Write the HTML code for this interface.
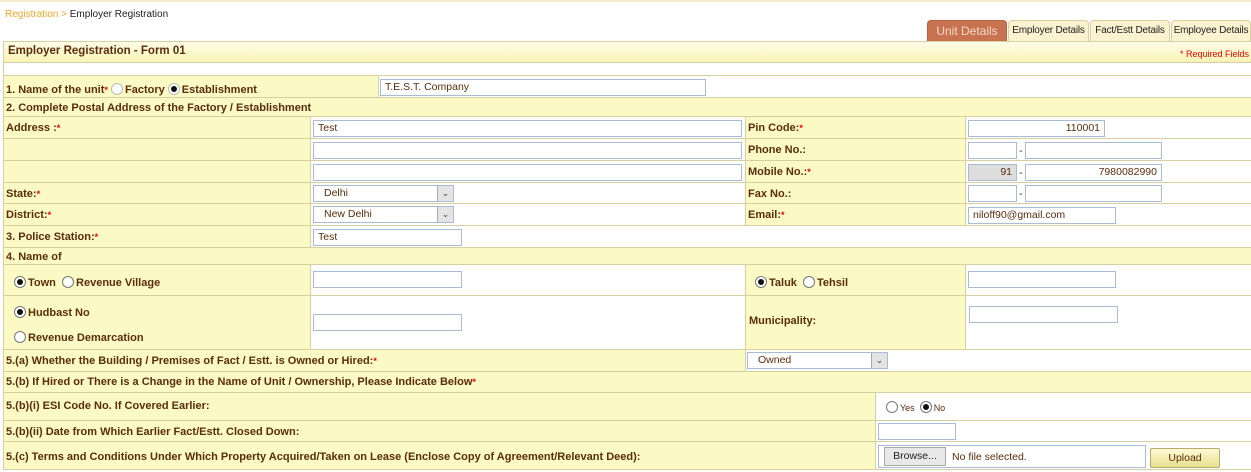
<!DOCTYPE html>
<html><head><meta charset="utf-8"><style>
*{box-sizing:border-box;margin:0;padding:0}
body{width:1251px;height:472px;background:#fff;font-family:"Liberation Sans",Arial,sans-serif;font-size:11px;color:#5a2d0c;position:relative;overflow:hidden}
.a{position:absolute}
.y{position:absolute;background:#fbf9c4;border-left:1px solid #d6cfa2;border-bottom:1px solid #d6cfa2}
.w{position:absolute;background:#fff;border-left:1px solid #d6cfa2;border-bottom:1px solid #d6cfa2}
.b{font-weight:bold;font-size:11px;color:#5a2d0c;white-space:nowrap}
.r{color:#e00;font-size:9px}
.in{position:absolute;background:#fff;border:1px solid #a9bcd4;height:17px;font-size:10.5px;color:#5a2d0c;padding:1px 4px;white-space:nowrap}
.rad{display:inline-block;width:12px;height:12px;border:1px solid #777;border-radius:50%;background:#fff;vertical-align:-2px;position:relative;margin-right:2px}
.rad.on:after{content:"";position:absolute;left:2px;top:2px;width:6px;height:6px;border-radius:50%;background:#111}
.sel{position:absolute;background:#fff;border:1px solid #a9bcd4;height:17px;font-size:10.5px;padding:1px 10px;color:#5a2d0c}
.sel i{position:absolute;right:0;top:0;width:16px;height:15px;background:#e4e4e4;border-left:1px solid #aaa;font-style:normal;font-size:9px;text-align:center;line-height:15px;color:#444}
.tab{position:absolute;top:20px;height:21px;background:#fbf3cf;border:1px solid #d6cfa2;border-bottom:none;border-radius:4px 4px 0 0;font-size:10px;letter-spacing:-0.2px;color:#222;text-align:center;line-height:20px;white-space:nowrap;overflow:hidden}
</style></head><body>
<div class="a" style="left:0;top:0;width:1251px;height:2px;background:#f3efcd"></div>
<div class="a" style="left:5px;top:9px;font-size:10px;"><span style="color:#f5a623">Registration &gt; </span><span style="color:#222">Employer Registration</span></div>
<div class="tab" style="left:927px;width:80px;background:#c8734f;color:#f3d9c8;font-size:12px;letter-spacing:0;border-color:#b8633f">Unit Details</div>
<div class="tab" style="left:1008px;width:81px">Employer Details</div>
<div class="tab" style="left:1090px;width:80px">Fact/Estt Details</div>
<div class="tab" style="left:1171px;width:80px">Employee Details</div>
<div class="a" style="left:3px;top:41px;width:1248px;height:22px;background:linear-gradient(#fefde8,#f7f3b4);border:1px solid #d6cfa2;border-right:none"></div>
<div class="a b" style="left:8px;top:45px;font-size:11.5px">Employer Registration - Form 01</div>
<div class="a" style="right:2px;top:49px;color:#e00;font-size:9px">* Required Fields</div>
<div class="w" style="left:3px;top:63px;width:1248px;height:13px"></div>
<div class="y" style="left:3px;top:76px;width:375px;height:22px"></div>
<div class="w" style="left:378px;top:76px;width:873px;height:22px"></div>
<div class="a b" style="left:6px;top:83px">1. Name of the unit<span class="r">*</span> <span class="rad" style="border-color:#bbb"></span>Factory <span class="rad on" style="border-color:#bbb"></span>Establishment</div>
<div class="in" style="left:380px;top:79px;width:326px">T.E.S.T. Company</div>
<div class="y" style="left:3px;top:98px;width:1248px;height:19px"></div>
<div class="a b" style="left:6px;top:102px">2. Complete Postal Address of the Factory / Establishment</div>
<div class="y" style="left:3px;top:117px;width:307px;height:22px"></div><div class="w" style="left:310px;top:117px;width:435px;height:22px"></div><div class="y" style="left:745px;top:117px;width:220px;height:22px"></div><div class="w" style="left:965px;top:117px;width:286px;height:22px"></div>
<div class="y" style="left:3px;top:139px;width:307px;height:22px"></div><div class="w" style="left:310px;top:139px;width:435px;height:22px"></div><div class="y" style="left:745px;top:139px;width:220px;height:22px"></div><div class="w" style="left:965px;top:139px;width:286px;height:22px"></div>
<div class="y" style="left:3px;top:161px;width:307px;height:22px"></div><div class="w" style="left:310px;top:161px;width:435px;height:22px"></div><div class="y" style="left:745px;top:161px;width:220px;height:22px"></div><div class="w" style="left:965px;top:161px;width:286px;height:22px"></div>
<div class="y" style="left:3px;top:183px;width:307px;height:21px"></div><div class="w" style="left:310px;top:183px;width:435px;height:21px"></div><div class="y" style="left:745px;top:183px;width:220px;height:21px"></div><div class="w" style="left:965px;top:183px;width:286px;height:21px"></div>
<div class="y" style="left:3px;top:204px;width:307px;height:22px"></div><div class="w" style="left:310px;top:204px;width:435px;height:22px"></div><div class="y" style="left:745px;top:204px;width:220px;height:22px"></div><div class="w" style="left:965px;top:204px;width:286px;height:22px"></div>
<div class="y" style="left:3px;top:226px;width:307px;height:22px"></div><div class="w" style="left:310px;top:226px;width:941px;height:22px"></div>
<div class="a b" style="left:6px;top:122px">Address :<span class="r">*</span></div>
<div class="a b" style="left:6px;top:188px">State:<span class="r">*</span></div>
<div class="a b" style="left:6px;top:209px">District:<span class="r">*</span></div>
<div class="a b" style="left:6px;top:231px">3. Police Station:<span class="r">*</span></div>
<div class="in" style="left:313px;top:120px;width:429px">Test</div>
<div class="in" style="left:313px;top:142px;width:429px"></div>
<div class="in" style="left:313px;top:164px;width:429px"></div>
<div class="sel" style="left:313px;top:185px;width:141px">Delhi<i>&#8964;</i></div>
<div class="sel" style="left:313px;top:206px;width:141px">New Delhi<i>&#8964;</i></div>
<div class="in" style="left:313px;top:229px;width:149px">Test</div>
<div class="a b" style="left:748px;top:122px">Pin Code:<span class="r">*</span></div>
<div class="a b" style="left:748px;top:144px">Phone No.:</div>
<div class="a b" style="left:748px;top:166px">Mobile No.:<span class="r">*</span></div>
<div class="a b" style="left:748px;top:188px">Fax No.:</div>
<div class="a b" style="left:748px;top:209px">Email:<span class="r">*</span></div>
<div class="in" style="left:968px;top:120px;width:137px;text-align:right">110001</div>
<div class="in" style="left:968px;top:142px;width:49px"></div><div class="a" style="left:1019px;top:145px">-</div><div class="in" style="left:1025px;top:142px;width:137px"></div>
<div class="in" style="left:968px;top:164px;width:49px;background:#ddd;text-align:right">91</div><div class="a" style="left:1019px;top:167px">-</div><div class="in" style="left:1025px;top:164px;width:137px;text-align:right">7980082990</div>
<div class="in" style="left:968px;top:185px;width:49px"></div><div class="a" style="left:1019px;top:188px">-</div><div class="in" style="left:1025px;top:185px;width:137px"></div>
<div class="in" style="left:968px;top:207px;width:148px">niloff90@gmail.com</div>
<div class="y" style="left:3px;top:248px;width:1248px;height:17px"></div>
<div class="a b" style="left:6px;top:251px">4. Name of</div>
<div class="y" style="left:3px;top:265px;width:307px;height:31px"></div><div class="w" style="left:310px;top:265px;width:435px;height:31px"></div><div class="y" style="left:745px;top:265px;width:220px;height:31px"></div><div class="w" style="left:965px;top:265px;width:286px;height:31px"></div>
<div class="y" style="left:3px;top:296px;width:307px;height:54px"></div><div class="w" style="left:310px;top:296px;width:435px;height:54px"></div><div class="y" style="left:745px;top:296px;width:220px;height:54px"></div><div class="w" style="left:965px;top:296px;width:286px;height:54px"></div>
<div class="a b" style="left:14px;top:276px"><span class="rad on"></span>Town &nbsp;<span class="rad"></span>Revenue Village</div>
<div class="a b" style="left:14px;top:306px"><span class="rad on"></span>Hudbast No</div>
<div class="a b" style="left:14px;top:331px"><span class="rad"></span>Revenue Demarcation</div>
<div class="in" style="left:313px;top:271px;width:149px"></div>
<div class="in" style="left:313px;top:314px;width:149px"></div>
<div class="a b" style="left:755px;top:276px"><span class="rad on"></span>Taluk &nbsp;<span class="rad"></span>Tehsil</div>
<div class="a b" style="left:749px;top:315px">Municipality:</div>
<div class="in" style="left:968px;top:271px;width:148px"></div>
<div class="in" style="left:969px;top:306px;width:149px"></div>
<div class="y" style="left:3px;top:350px;width:742px;height:22px"></div><div class="w" style="left:745px;top:350px;width:506px;height:22px"></div>
<div class="a b" style="left:6px;top:355px">5.(a) Whether the Building / Premises of Fact / Estt. is Owned or Hired:<span class="r">*</span></div>
<div class="sel" style="left:747px;top:352px;width:141px">Owned<i>&#8964;</i></div>
<div class="y" style="left:3px;top:372px;width:1248px;height:21px"></div>
<div class="a b" style="left:6px;top:376px">5.(b) If Hired or There is a Change in the Name of Unit / Ownership, Please Indicate Below<span class="r">*</span></div>
<div class="y" style="left:3px;top:393px;width:872px;height:28px"></div><div class="w" style="left:875px;top:393px;width:376px;height:28px"></div>
<div class="y" style="left:3px;top:421px;width:872px;height:21px"></div><div class="w" style="left:875px;top:421px;width:376px;height:21px"></div>
<div class="y" style="left:3px;top:442px;width:872px;height:28px"></div><div class="w" style="left:875px;top:442px;width:376px;height:28px"></div>
<div class="a b" style="left:6px;top:400px">5.(b)(i) ESI Code No. If Covered Earlier:</div>
<div class="a b" style="left:6px;top:426px">5.(b)(ii) Date from Which Earlier Fact/Estt. Closed Down:</div>
<div class="a b" style="left:6px;top:451px">5.(c) Terms and Conditions Under Which Property Acquired/Taken on Lease (Enclose Copy of Agreement/Relevant Deed):</div>
<div class="a" style="left:886px;top:401px;font-size:9px"><span class="rad"></span>Yes &nbsp;<span class="rad on"></span>No</div>
<div class="in" style="left:878px;top:423px;width:78px"></div>
<div class="a" style="left:878px;top:445px;width:268px;height:23px;border:1px solid #a9bcd4;background:#fff"></div>
<div class="a" style="left:884px;top:447px;width:62px;height:19px;background:#e8e8e8;border:1px solid #aaa;color:#222;font-size:10.5px;text-align:center;line-height:17px">Browse...</div>
<div class="a" style="left:952px;top:451px;font-size:10.5px;color:#5a2d0c">No file selected.</div>
<div class="a" style="left:1150px;top:448px;width:70px;height:20px;background:linear-gradient(#fdfbd6,#e8df8c);border:1px solid #b5ab6a;border-radius:2px;text-align:center;line-height:18px;font-size:10.5px;color:#5a2d0c">Upload</div>
</body></html>
